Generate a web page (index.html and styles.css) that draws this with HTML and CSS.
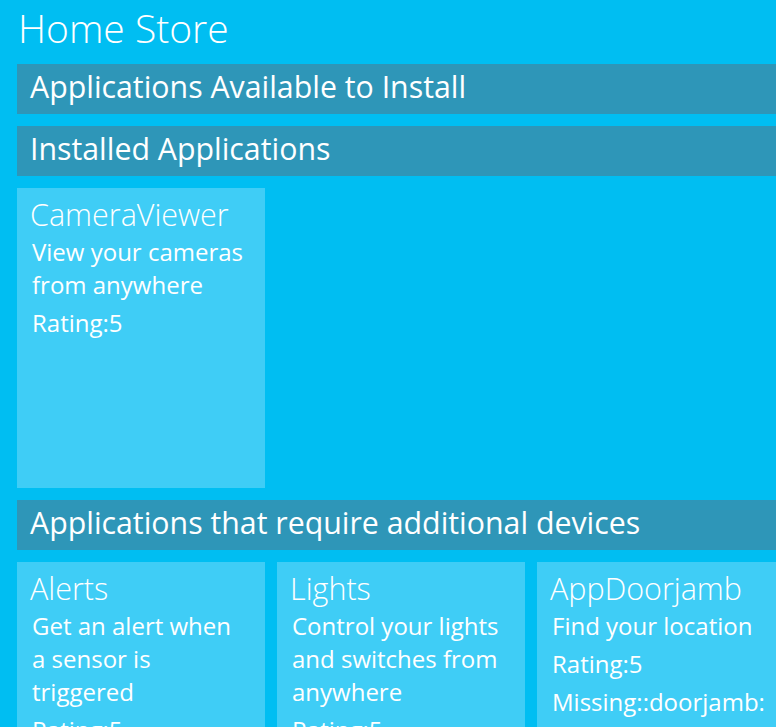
FILE: index.html
```html
<!DOCTYPE html>
<html>
<head>
<meta charset="utf-8">
<link rel="stylesheet" href="styles.css">
</head>
<body>
<div class="page">
  <h1 class="title">Home Store</h1>
  <div class="section">
    <div class="band">Applications Available to Install</div>
  </div>
  <div class="section">
    <div class="band">Installed Applications</div>
    <div class="tiles">
      <div class="tile">
        <div class="tile-name">CameraViewer</div>
        <div class="tile-line">View your cameras from anywhere</div>
        <div class="tile-line">Rating:5</div>
      </div>
    </div>
  </div>
  <div class="section">
    <div class="band">Applications that require additional devices</div>
    <div class="tiles">
      <div class="tile">
        <div class="tile-name">Alerts</div>
        <div class="tile-line">Get an alert when a sensor is triggered</div>
        <div class="tile-line">Rating:5</div>
      </div>
      <div class="tile">
        <div class="tile-name">Lights</div>
        <div class="tile-line">Control your lights and switches from anywhere</div>
        <div class="tile-line">Rating:5</div>
      </div>
      <div class="tile">
        <div class="tile-name">AppDoorjamb</div>
        <div class="tile-line">Find your location</div>
        <div class="tile-line">Rating:5</div>
        <div class="tile-line">Missing::doorjamb:</div>
      </div>
    </div>
  </div>
</div>
</body>
</html>
```
FILE: styles.css
```css
html, body {
  margin: 0;
  padding: 0;
  overflow: hidden;
  height: 100%;
}
body {
  background: #00bef2;
  color: #ffffff;
  font-family: "Open Sans", "Noto Sans", sans-serif;
}
.page {
  width: 1000px;
  padding: 4px 0 0 17px;
  display: flex;
  flex-direction: column;
  gap: 12px;
}
.title {
  margin: 0 0 0 1px;
  font-size: 39px;
  font-weight: 300;
  line-height: 48px;
}
.section {
  display: flex;
  flex-direction: column;
  gap: 12px;
}
.band {
  background: #2e96b8;
  height: 50px;
  line-height: 46px;
  padding-left: 13px;
  font-size: 30.3px;
  font-weight: 400;
}
.tiles {
  display: flex;
  gap: 12px;
}
.tile {
  width: 248px;
  height: 300px;
  flex: none;
  box-sizing: border-box;
  background: #3fcdf6;
  padding: 5px 17px 0 13px;
  display: flex;
  flex-direction: column;
  gap: 5px;
}
.tile-name {
  font-size: 30.5px;
  font-weight: 300;
  line-height: 42px;
  margin-bottom: -5px;
}
.tile-line {
  font-size: 24px;
  line-height: 33px;
  padding-left: 2px;
}
```
